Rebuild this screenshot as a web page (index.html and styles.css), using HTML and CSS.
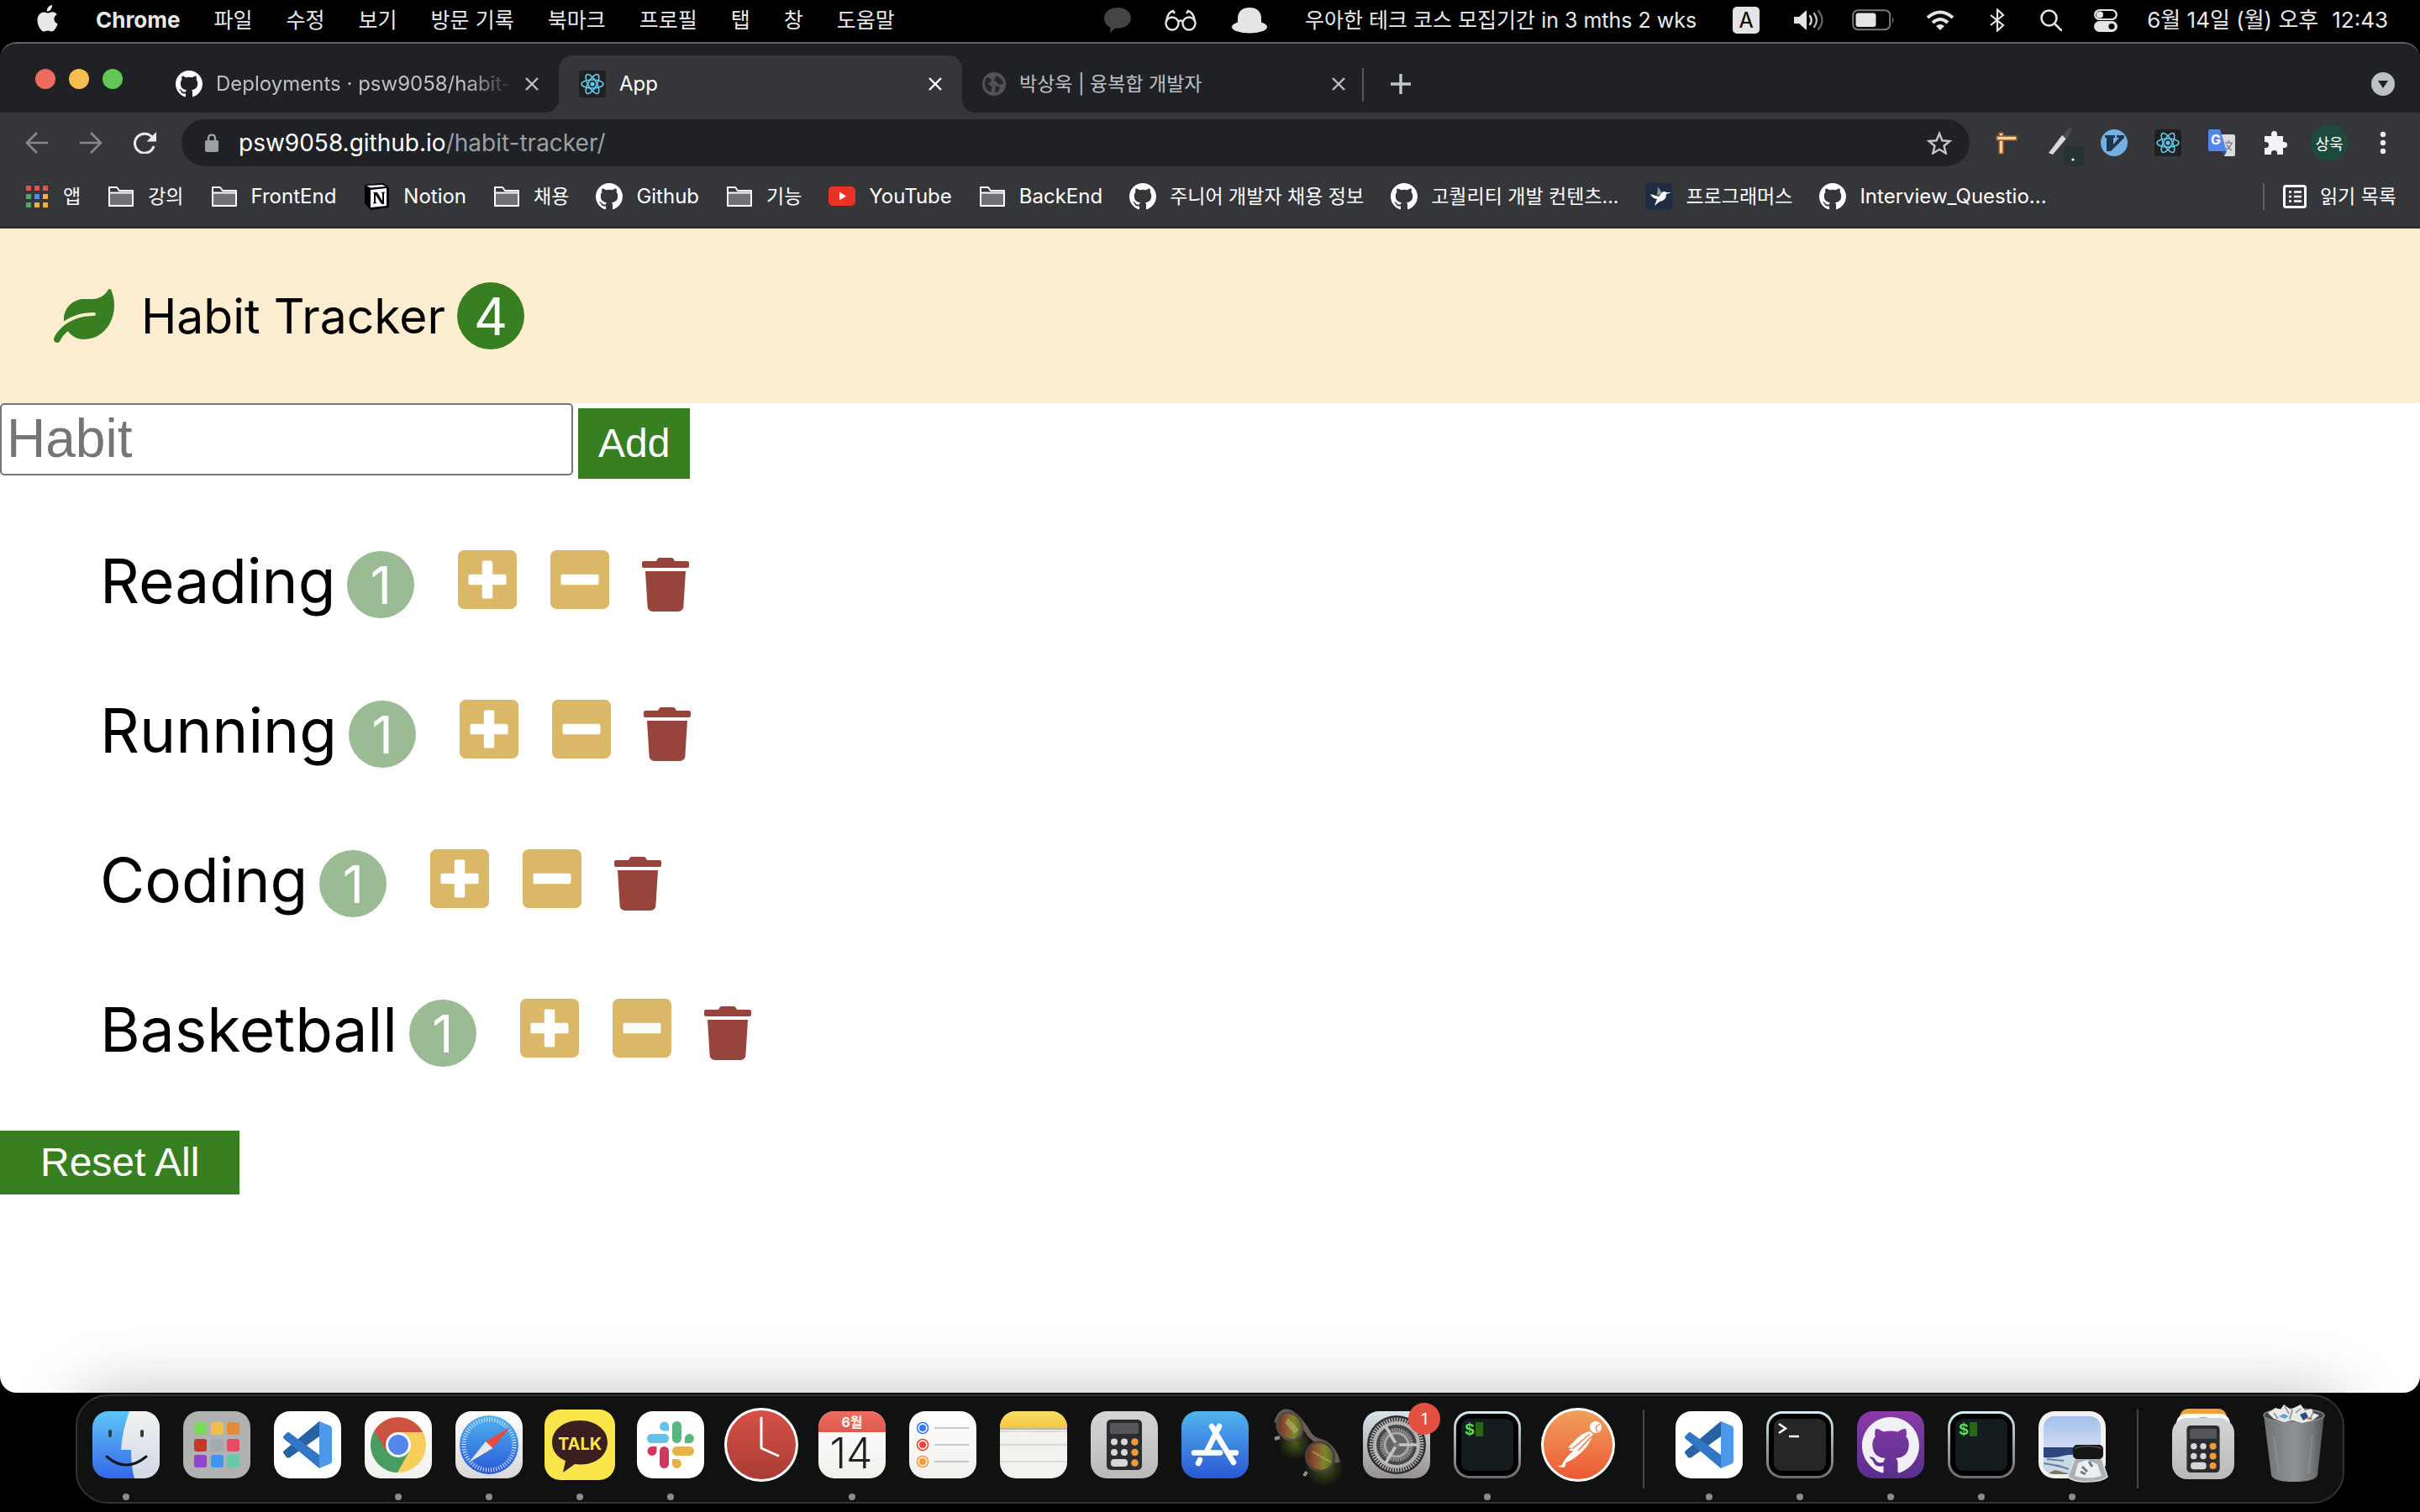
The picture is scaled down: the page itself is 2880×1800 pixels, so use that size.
FILE: index.html
```html
<!DOCTYPE html>
<html lang="ko">
<head>
<meta charset="utf-8">
<title>App</title>
<link rel="stylesheet" href="styles.css">
</head>
<body>
<svg class="defs" aria-hidden="true">
  <defs>
    <symbol id="github" viewBox="0 0 16 16"><path d="M8 0C3.58 0 0 3.58 0 8c0 3.54 2.29 6.53 5.47 7.59.4.07.55-.17.55-.38 0-.19-.01-.82-.01-1.49-2.01.37-2.53-.49-2.69-.94-.09-.23-.48-.94-.82-1.13-.28-.15-.68-.52-.01-.53.63-.01 1.08.58 1.23.82.72 1.21 1.87.87 2.33.66.07-.52.28-.87.51-1.07-1.78-.2-3.64-.89-3.64-3.95 0-.87.31-1.59.82-2.15-.08-.2-.36-1.02.08-2.12 0 0 .67-.21 2.2.82.64-.18 1.32-.27 2-.27.68 0 1.36.09 2 .27 1.53-1.04 2.2-.82 2.2-.82.44 1.1.16 1.92.08 2.12.51.56.82 1.27.82 2.15 0 3.07-1.87 3.75-3.65 3.95.29.25.54.73.54 1.48 0 1.07-.01 1.93-.01 2.2 0 .21.15.46.55.38A8.013 8.013 0 0016 8c0-4.42-3.58-8-8-8z" fill="currentColor"/></symbol>
    <symbol id="react" viewBox="0 0 32 32"><rect width="32" height="32" rx="3" fill="#20201f"/><g fill="none" stroke="#61c8ee" stroke-width="1.6"><ellipse cx="16" cy="16" rx="13" ry="5"/><ellipse cx="16" cy="16" rx="13" ry="5" transform="rotate(60 16 16)"/><ellipse cx="16" cy="16" rx="13" ry="5" transform="rotate(120 16 16)"/></g><circle cx="16" cy="16" r="2.6" fill="#61c8ee"/></symbol>
    <symbol id="folder" viewBox="0 0 32 26"><path d="M2 8V2h9l3 4h16v18H2z" fill="none" stroke="#fff" stroke-width="2" stroke-linejoin="round"/><path d="M3 9h26v14H3z" fill="#707174"/><path d="M2 8.500h28" stroke="#fff" stroke-width="2"/></symbol>
    <symbol id="close" viewBox="0 0 16 16"><path d="M1 1l14 14M15 1L1 15" stroke="currentColor" stroke-width="2.400" fill="none"/></symbol>
    <symbol id="plus-square" viewBox="0 32 448 448"><path fill="currentColor" d="M400 32H48C21.500 32 0 53.500 0 80v352c0 26.500 21.500 48 48 48h352c26.500 0 48-21.500 48-48V80c0-26.500-21.500-48-48-48zm-32 252c0 6.600-5.400 12-12 12h-92v92c0 6.600-5.400 12-12 12h-56c-6.600 0-12-5.400-12-12v-92H92c-6.600 0-12-5.400-12-12v-56c0-6.600 5.400-12 12-12h92v-92c0-6.600 5.400-12 12-12h56c6.600 0 12 5.400 12 12v92h92c6.600 0 12 5.400 12 12v56z"/></symbol>
    <symbol id="minus-square" viewBox="0 32 448 448"><path fill="currentColor" d="M400 32H48C21.500 32 0 53.500 0 80v352c0 26.500 21.500 48 48 48h352c26.500 0 48-21.500 48-48V80c0-26.500-21.500-48-48-48zM92 296c-6.600 0-12-5.400-12-12v-56c0-6.600 5.400-12 12-12h264c6.600 0 12 5.400 12 12v56c0 6.600-5.400 12-12 12H92z"/></symbol>
    <symbol id="trash" viewBox="0 0 448 512"><path fill="currentColor" d="M432 32H312l-9.400-18.700A24 24 0 0 0 281.100 0H166.800a23.720 23.720 0 0 0-21.400 13.300L136 32H16A16 16 0 0 0 0 48v32a16 16 0 0 0 16 16h416a16 16 0 0 0 16-16V48a16 16 0 0 0-16-16zM53.200 467a48 48 0 0 0 47.900 45h245.800a48 48 0 0 0 47.900-45L416 128H32z"/></symbol>
    <symbol id="vscode" viewBox="-8 -8 96 96"><rect width="80" height="80" rx="19" fill="#fff"/><path d="M12 47L54 12v18L19 55q-2 1-4 0l-3-4q-2-2 0-4z" fill="#2861a4"/><path d="M12 33q-2-2 0-4l3-3q2-2 4 0l35 26v16z" fill="#3277c6"/><path d="M54 12l12 5q3 1 3 4v38q0 3-3 4l-12 5z" fill="#4b99e8"/></symbol>
    <linearGradient id="g-rim" x2="0" y2="1"><stop offset="0" stop-color="#d8eef4"/><stop offset=".5" stop-color="#9aa4a8"/><stop offset="1" stop-color="#6c6c6c"/></linearGradient>
    <symbol id="iterm" viewBox="-8 -8 96 96"><rect width="80" height="80" rx="19" fill="url(#g-rim)"/><rect x="3" y="3" width="74" height="74" rx="16" fill="#000"/><rect x="9" y="9" width="62" height="62" rx="9" fill="#151c1f"/><text x="13" y="28" class="mono prompt">$</text><path d="M26 13h9v17h-9z" fill="#2a651c"/></symbol>
    <symbol id="calc" viewBox="0 0 42 60"><rect width="42" height="60" rx="5" fill="#2b2c30"/><rect x="4" y="4" width="34" height="13" rx="2" fill="#54565a"/><g fill="#d6d6d6"><circle cx="9" cy="26.500" r="4"/><circle cx="21" cy="26.500" r="4"/><circle cx="9" cy="39" r="4"/><circle cx="21" cy="39" r="4"/><rect x="5" y="47" width="20" height="9" rx="4"/></g><g fill="#f29a37"><circle cx="33.500" cy="26.500" r="4.300"/><circle cx="33.500" cy="39" r="4.300"/><circle cx="33.500" cy="51.500" r="4.300"/></g></symbol>
    <linearGradient id="g-blue" x2="0" y2="1"><stop offset="0" stop-color="#5cc6f8"/><stop offset="1" stop-color="#3567ea"/></linearGradient>
    <linearGradient id="g-store" x2="0" y2="1"><stop offset="0" stop-color="#50b4ee"/><stop offset="1" stop-color="#2a58d6"/></linearGradient>
    <linearGradient id="g-face" x2="0" y2="1"><stop offset="0" stop-color="#f2f2f2"/><stop offset="1" stop-color="#cfd8e4"/></linearGradient>
    <linearGradient id="g-white" x2="0" y2="1"><stop offset="0" stop-color="#fff"/><stop offset="1" stop-color="#d8d8d8"/></linearGradient>
    <linearGradient id="g-paper" x2="0" y2="1"><stop offset="0" stop-color="#fff"/><stop offset="1" stop-color="#f2f0ec"/></linearGradient>
    <linearGradient id="g-red" x2="0" y2="1"><stop offset="0" stop-color="#d65047"/><stop offset="1" stop-color="#a93d34"/></linearGradient>
    <linearGradient id="g-cal" x2="0" y2="1"><stop offset="0" stop-color="#ee6b5f"/><stop offset="1" stop-color="#dd5a4e"/></linearGradient>
    <linearGradient id="g-yellow" x2="0" y2="1"><stop offset="0" stop-color="#f9dc67"/><stop offset="1" stop-color="#f6c73f"/></linearGradient>
    <linearGradient id="g-gray" x2="0" y2="1"><stop offset="0" stop-color="#d4d6d6"/><stop offset="1" stop-color="#b9b9b7"/></linearGradient>
    <linearGradient id="g-pref" x2="0" y2="1"><stop offset="0" stop-color="#d9e3e9"/><stop offset="1" stop-color="#95928f"/></linearGradient>
    <linearGradient id="g-orange" x2="0" y2="1"><stop offset="0" stop-color="#f0a05c"/><stop offset="1" stop-color="#ec5935"/></linearGradient>
    <linearGradient id="g-purple" x2="0" y2="1"><stop offset="0" stop-color="#8a3ba8"/><stop offset="1" stop-color="#582f8c"/></linearGradient>
    <linearGradient id="g-lens" x1="0" y1=".1" x2="1" y2=".8"><stop offset="0" stop-color="#5c2019"/><stop offset=".4" stop-color="#8a5530"/><stop offset=".65" stop-color="#80862c"/><stop offset="1" stop-color="#4a5a1c"/></linearGradient>
    <linearGradient id="g-bin"><stop offset="0" stop-color="#6f7376"/><stop offset=".5" stop-color="#8f9396"/><stop offset=".8" stop-color="#74787b"/><stop offset="1" stop-color="#515558"/></linearGradient>
    <linearGradient id="g-sky" x2="0" y2="1"><stop offset="0" stop-color="#9dbbe9"/><stop offset="1" stop-color="#cfdcf2"/></linearGradient>
    <radialGradient id="g-glow"><stop offset="0" stop-color="#5f7a1c" stop-opacity=".7"/><stop offset="1" stop-color="#5f7a1c" stop-opacity="0"/></radialGradient>
    <clipPath id="squircle"><rect width="80" height="80" rx="19"/></clipPath>
    <clipPath id="photo"><rect x="6" y="6" width="68" height="69" rx="13"/></clipPath>
  </defs>
</svg>

<header class="menubar">
  <nav class="menus" aria-label="메뉴 막대">
    <button class="apple" aria-label="Apple"><svg width="28" height="34" viewBox="0 0 28 34"><path d="M19 1c.3 2.200-.6 4-1.700 5.400-1.200 1.400-2.800 2.300-4.500 2.200-.3-2 .6-4 1.700-5.200C15.700 2 17.600 1.200 19 1zM24.800 12.200c-2.200 1.300-3.400 3-3.400 5.400 0 2.800 1.600 4.800 4.200 5.800-.9 2.700-2 4.900-3.600 6.900-1 1.300-2.200 2.300-3.800 2.300s-2.300-1-4.300-1-2.900 1-4.400 1c-1.700 0-3-1.200-4.100-2.700C2.900 26.800 1.500 23 1.500 19c0-6 3.800-9.600 7.800-9.600 2 0 3.600 1.200 4.800 1.200 1.200 0 3.100-1.400 5.500-1.400 2 0 3.900 1 5.200 3z" fill="#e8e8e8"/></svg></button>
    <button class="bold">Chrome</button>
    <button>파일</button><button>수정</button><button>보기</button><button>방문 기록</button><button>북마크</button><button>프로필</button><button>탭</button><button>창</button><button>도움말</button>
  </nav>
  <div class="status">
    <svg class="i-talk" width="32" height="32" viewBox="0 0 32 32"><path d="M16 1C7 1 0 6.500 0 13.500c0 5 3 9 7.500 11L7 31l6-5.400C23.500 27 32 21 32 13.500 32 6.500 25 1 16 1z" fill="#444"/></svg>
    <svg class="i-glasses" width="38" height="26" viewBox="0 0 38 26" fill="none" stroke="#e4e4e4" stroke-width="2.400"><circle cx="9" cy="17" r="7.500"/><circle cx="29" cy="17" r="7.500"/><path d="M16 15q3-3 6 0M2 15Q3 4 10 2l2 3M36 15Q35 4 28 2l-2 3"/></svg>
    <svg class="i-hat" width="42" height="32" viewBox="0 0 42 32" fill="#e4e4e4"><path d="M7 24V14C7 5 13 1 21 1s14 4 14 13v10z"/><ellipse cx="21" cy="24" rx="21" ry="7.500"/></svg>
    <span class="countdown">우아한 테크 코스 모집기간 in 3 mths 2 wks</span>
    <span class="input-source">A</span>
    <svg class="i-sound" width="38" height="26" viewBox="0 0 38 26"><path d="M1 9h6l9-8v24l-9-8H1z" fill="#e4e4e4"/><g fill="none" stroke-width="2.200" stroke-linecap="round"><path d="M20 8q3.500 5 0 10" stroke="#e4e4e4"/><path d="M25 5q6 8 0 16" stroke="#bbb"/><path d="M30 2q9 11 0 22" stroke="#666"/></g></svg>
    <svg class="i-battery" width="52" height="26" viewBox="0 0 52 26"><rect x="1.200" y="1.200" width="44" height="23" rx="6" fill="none" stroke="#7a7a7a" stroke-width="2"/><rect x="4.500" y="4.500" width="24" height="16.500" rx="3" fill="#e4e4e4"/><path d="M48 9q3 4 0 8z" fill="#7a7a7a"/></svg>
    <svg class="i-wifi" width="34" height="26" viewBox="0 0 34 26"><g fill="none" stroke="#e4e4e4" stroke-width="4"><path d="M2 10Q17-3 32 10"/><path d="M8 16q9-8 18 0"/></g><path d="M17 25l-5-5q5-4 10 0z" fill="#e4e4e4"/></svg>
    <svg class="i-bt" width="18" height="28" viewBox="0 0 18 28" fill="none" stroke="#e4e4e4" stroke-width="2.200"><path d="M1 8l15 12-7 6.500v-25L16 8 1 20"/></svg>
    <svg class="i-search" width="26" height="26" viewBox="0 0 26 26" fill="none" stroke="#e4e4e4" stroke-width="2.600"><circle cx="10.500" cy="10.500" r="9"/><path d="M17 17l8 8" stroke-linecap="round"/></svg>
    <svg class="i-cc" width="28" height="28" viewBox="0 0 28 28"><rect x="1.200" y="2" width="25.600" height="11" rx="5.500" fill="none" stroke="#e4e4e4" stroke-width="2.200"/><circle cx="7" cy="7.500" r="4" fill="#e4e4e4"/><rect y="15" width="28" height="13" rx="6.500" fill="#e4e4e4"/><circle cx="21" cy="21.500" r="3.600" fill="#000"/></svg>
    <time class="clock"><span>6월 14일 (월) 오후</span><span>12:43</span></time>
  </div>
</header>

<section class="window">
  <div class="tabstrip">
    <div class="lights"><button class="red" aria-label="닫기"></button><button class="yellow" aria-label="최소화"></button><button class="green" aria-label="확대"></button></div>
    <div class="tab">
      <svg class="white" width="32" height="32"><use href="#github"/></svg>
      <span class="tab-title latin fade">Deployments · psw9058/habit-</span>
      <button aria-label="탭 닫기"><svg width="16" height="16"><use href="#close"/></svg></button>
    </div>
    <div class="tab active">
      <svg width="32" height="32"><use href="#react"/></svg>
      <span class="tab-title latin">App</span>
      <button aria-label="탭 닫기"><svg width="16" height="16"><use href="#close"/></svg></button>
    </div>
    <div class="tab last">
      <svg width="28" height="28" viewBox="0 0 28 28"><circle cx="14" cy="14" r="14" fill="#505256"/><path d="M5 6q5 0 6 4l-4 4 5 4-2 6Q3 21 3 13q0-4 2-7zM17 4q7 3 8 10l-5 1-3-4-3-1 1-3zM16 16l5 2-2 5-4 1z" fill="#25272a"/></svg>
      <span class="tab-title">박상욱 | 융복합 개발자</span>
      <button aria-label="탭 닫기"><svg width="16" height="16"><use href="#close"/></svg></button>
    </div>
    <button class="new-tab" aria-label="새 탭"><svg width="24" height="24" viewBox="0 0 24 24"><path d="M12 0v24M0 12h24" stroke="#c3c6ca" stroke-width="3.400"/></svg></button>
    <button class="tab-search" aria-label="탭 검색"><svg width="28" height="28" viewBox="0 0 28 28"><circle cx="14" cy="14" r="14" fill="#bdc1c6"/><path d="M8 10h12l-6 9z" fill="#202124"/></svg></button>
  </div>

  <div class="toolbar">
    <div class="nav-buttons">
      <button aria-label="뒤로"><svg width="28" height="26" viewBox="0 0 28 26" fill="none" stroke="#86888b" stroke-width="2.600"><path d="M27 13H2M14 1L2 13l12 12"/></svg></button>
      <button aria-label="앞으로"><svg width="28" height="26" viewBox="0 0 28 26" fill="none" stroke="#86888b" stroke-width="2.600"><path d="M1 13h25M14 1l12 12-12 12"/></svg></button>
      <button aria-label="새로고침"><svg width="28" height="26" viewBox="0 0 28 26"><path d="M24 8A11.500 11.500 0 1 0 25 17" fill="none" stroke="#e8eaed" stroke-width="3"/><path d="M28 0v11.500H16.500z" fill="#e8eaed"/></svg></button>
    </div>
    <div class="omnibox" role="textbox" aria-label="주소창">
      <svg width="16" height="22" viewBox="0 0 16 22"><rect y="8" width="16" height="14" rx="2" fill="#9aa0a6"/><path d="M4 9V6q0-4.500 4-4.500T12 6v3" fill="none" stroke="#9aa0a6" stroke-width="2.400"/></svg>
      <span class="url">psw9058.github.io<span class="path">/habit-tracker/</span></span>
      <button aria-label="북마크 추가"><svg width="30" height="28" viewBox="0 0 30 28"><path d="M15 3l3.400 8.300 9 .7-6.900 5.800 2.200 8.700L15 21.800l-7.700 4.700 2.200-8.700L2.600 12l9-.7z" fill="none" stroke="#c3c6ca" stroke-width="2.400"/></svg></button>
    </div>
    <div class="extensions">
      <button aria-label="Page Ruler"><svg width="32" height="32" viewBox="0 0 32 32"><path d="M7 4h5v25H7z" fill="#f6cf9d" stroke="#8f5423" stroke-width="1.500"/><path d="M4 8h24v5H4z" fill="#f6cf9d" stroke="#8f5423" stroke-width="1.500"/></svg></button>
      <button aria-label="Dropper"><svg width="44" height="48" viewBox="0 0 44 48"><path d="M2 36L18 15l5 4L7 38z" fill="#d9d9d7"/><path d="M19 15l7-9q4-2 4 3l-7 11z" fill="#4b4b49"/><rect x="20" y="28" width="24" height="24" rx="4" fill="#273235"/><circle cx="31" cy="44" r="1.600" fill="#fff"/></svg></button>
      <button aria-label="Vimium"><svg width="32" height="32" viewBox="0 0 32 32"><circle cx="16" cy="16" r="16" fill="#74b0e2"/><path d="M5 7h12v3h-2v8l7-8h-3V7h9v3L12 26H7V10H5z" fill="#22364a"/></svg></button>
      <button aria-label="React"><svg width="32" height="32"><use href="#react"/></svg></button>
      <button aria-label="Google 번역"><svg width="32" height="32" viewBox="0 0 32 32"><path d="M12 6h18q2 0 2 2v22q0 2-2 2H19z" fill="#dcdcdc"/><path d="M2 0h12l8 26H2q-2 0-2-2V2q0-2 2-2z" fill="#5487ec"/><path d="M16 26h6l-3 6z" fill="#3949ab"/><path d="M20 16h9M24.500 13v3M28 16q-2 6-7 8M22 18q2 5 6 7" fill="none" stroke="#7a868c" stroke-width="1.500"/><text x="3" y="18" class="g-letter">G</text></svg></button>
      <button aria-label="확장 프로그램"><svg width="32" height="32" viewBox="0 0 32 32"><path d="M3 8h8V6q0-4 3.500-4T18 6v2h7v7h1.500q3.500 0 3.500 3.500T26.500 22H25v8h-7v-2q0-3-3.500-3T11 28v2H3v-8h1.500Q8 22 8 18.500T4.500 15H3z" fill="#f1f3f4"/></svg></button>
    </div>
    <button class="avatar">상욱</button>
    <button class="kebab" aria-label="메뉴"><svg width="8" height="28" viewBox="0 0 8 28" fill="#e8eaed"><circle cx="4" cy="4" r="3.200"/><circle cx="4" cy="14" r="3.200"/><circle cx="4" cy="24" r="3.200"/></svg></button>
  </div>

  <nav class="bookmarks" aria-label="북마크">
    <a href="#"><svg width="28" height="26" viewBox="0 0 28 26"><g fill="#df5447"><path d="M0 0h6v6H0zM10 0h6v6h-6zM20 0h6v6h-6z"/></g><path d="M0 10h6v6H0zM0 20h6v6H0z" fill="#57a55d"/><path d="M10 10h6v6h-6z" fill="#4d8bf5"/><path d="M20 10h6v6h-6zM10 20h6v6h-6zM20 20h6v6h-6z" fill="#eeb03e"/></svg>앱</a>
    <a href="#"><svg width="32" height="26"><use href="#folder"/></svg>강의</a>
    <a href="#" class="latin"><svg width="32" height="26"><use href="#folder"/></svg>FrontEnd</a>
    <a href="#" class="latin"><svg width="32" height="32" viewBox="0 0 32 32"><path d="M2 2l22-2 7 5v24l-22 3-7-8z" fill="#000"/><path d="M9 8l19-2v21l-19 2z" fill="#fff"/><path d="M4 3l19-1 4 2-18 1.500z" fill="#fff"/><path d="M12 11h5l6 10V12l-2-1 5-.500v1l-1 .500v13h-3L15 14v9l2 1-5 .500v-1l1-.500V12z" fill="#000"/></svg>Notion</a>
    <a href="#"><svg width="32" height="26"><use href="#folder"/></svg>채용</a>
    <a href="#" class="latin"><svg class="white" width="32" height="32"><use href="#github"/></svg>Github</a>
    <a href="#"><svg width="32" height="26"><use href="#folder"/></svg>기능</a>
    <a href="#" class="latin"><svg width="32" height="24" viewBox="0 0 32 24"><rect width="32" height="23" rx="5" fill="#e93223"/><path d="M13 6.500l8 5-8 5z" fill="#fff"/></svg>YouTube</a>
    <a href="#" class="latin"><svg width="32" height="26"><use href="#folder"/></svg>BackEnd</a>
    <a href="#"><svg class="white" width="32" height="32"><use href="#github"/></svg>주니어 개발자 채용 정보</a>
    <a href="#"><svg class="white" width="32" height="32"><use href="#github"/></svg>고퀄리티 개발 컨텐츠...</a>
    <a href="#"><svg width="32" height="32" viewBox="0 0 32 32"><rect width="32" height="32" rx="4" fill="#202c40"/><path d="M15 4l5 8-6 3z" fill="#8b95a5"/><path d="M6 13l10 3 4-5q3-2 5 0l6 0-6 2q0 8-8 9l-6 5 3-8q-6-1-8-6z" fill="#fff"/></svg>프로그래머스</a>
    <a href="#" class="latin"><svg class="white" width="32" height="32"><use href="#github"/></svg>Interview_Questio...</a>
    <button class="reading-list"><svg width="28" height="28" viewBox="0 0 28 28" fill="none" stroke="#fff"><rect x="1.500" y="1.500" width="25" height="25" rx="2" stroke-width="3"/><path d="M7 8.500h3M13 8.500h9M7 14h3M13 14h9M7 19.500h3M13 19.500h9" stroke-width="2.600"/></svg>읽기 목록</button>
  </nav>

  <main class="page">
    <header class="navbar">
      <svg class="leaf" width="72" height="64" viewBox="0 0 576 512"><path fill="currentColor" d="M546.200 9.700c-5.600-12.500-21.600-13-28.300-1.200C486.900 62.400 431.400 96 368 96h-80C182 96 96 182 96 288c0 7 .8 13.700 1.500 20.500C161.300 262.800 253.400 224 384 224c8.800 0 16 7.200 16 16s-7.200 16-16 16C132.600 256 26 410.100 2.400 468c-6.600 16.300 1.200 34.900 17.500 41.600 16.400 6.800 35-1.100 41.800-17.300 1.500-3.600 20.900-47.900 71.900-90.600 32.400 43.900 94 85.800 174.900 77.200C465.500 467.500 576 326.700 576 154.300c0-50.200-10.800-102.200-29.800-144.600z"/></svg>
      <h1 class="title">Habit Tracker</h1>
      <span class="badge total">4</span>
    </header>
    <form class="add-form">
      <input class="habit-input" type="text" placeholder="Habit" aria-label="Habit">
      <button class="add" type="button">Add</button>
    </form>
    <ul class="habits">
      <li class="habit"><span class="name">Reading</span><span class="badge">1</span><button class="step" aria-label="increase"><svg width="70" height="70"><use href="#plus-square"/></svg></button><button class="step" aria-label="decrease"><svg width="70" height="70"><use href="#minus-square"/></svg></button><button class="delete" aria-label="delete"><svg width="56" height="64"><use href="#trash"/></svg></button></li>
      <li class="habit"><span class="name">Running</span><span class="badge">1</span><button class="step" aria-label="increase"><svg width="70" height="70"><use href="#plus-square"/></svg></button><button class="step" aria-label="decrease"><svg width="70" height="70"><use href="#minus-square"/></svg></button><button class="delete" aria-label="delete"><svg width="56" height="64"><use href="#trash"/></svg></button></li>
      <li class="habit"><span class="name">Coding</span><span class="badge">1</span><button class="step" aria-label="increase"><svg width="70" height="70"><use href="#plus-square"/></svg></button><button class="step" aria-label="decrease"><svg width="70" height="70"><use href="#minus-square"/></svg></button><button class="delete" aria-label="delete"><svg width="56" height="64"><use href="#trash"/></svg></button></li>
      <li class="habit"><span class="name">Basketball</span><span class="badge">1</span><button class="step" aria-label="increase"><svg width="70" height="70"><use href="#plus-square"/></svg></button><button class="step" aria-label="decrease"><svg width="70" height="70"><use href="#minus-square"/></svg></button><button class="delete" aria-label="delete"><svg width="56" height="64"><use href="#trash"/></svg></button></li>
    </ul>
    <button class="reset">Reset All</button>
  </main>
</section>

<footer class="dock">
  <button class="app running" aria-label="Finder"><svg viewBox="-8 -8 96 96"><g clip-path="url(#squircle)"><path d="M0 0h80v80H0z" fill="url(#g-blue)"/><path d="M44 0Q35 25 34 46h12q0 20 4 34h30V0z" fill="url(#g-face)"/></g><path d="M21 24v5M59 24v5" stroke="#333a44" stroke-width="4" stroke-linecap="round"/><path d="M17 54q23 20 47 0" fill="none" stroke="#12161e" stroke-width="3" stroke-linecap="round"/></svg></button>
  <button class="app" aria-label="Launchpad"><svg viewBox="-8 -8 96 96"><rect width="80" height="80" rx="19" fill="#b0b1b1"/><rect x="13" y="13" width="15" height="15" rx="3" fill="#77dc55"/><rect x="33" y="13" width="15" height="15" rx="3" fill="#f3bf43"/><rect x="52" y="13" width="15" height="15" rx="3" fill="#e78a36"/><rect x="13" y="33" width="15" height="15" rx="3" fill="#ca3529"/><rect x="33" y="33" width="15" height="15" rx="3" fill="#a3abaf"/><rect x="52" y="33" width="15" height="15" rx="3" fill="#e94b60"/><rect x="13" y="52" width="15" height="15" rx="3" fill="#8c46c8"/><rect x="33" y="52" width="15" height="15" rx="3" fill="#3f96f0"/><rect x="52" y="52" width="15" height="15" rx="3" fill="#67c9a8"/></svg></button>
  <button class="app" aria-label="Visual Studio Code"><svg><use href="#vscode"/></svg></button>
  <button class="app running" aria-label="Chrome"><svg viewBox="-8 -8 96 96"><rect width="80" height="80" rx="19" fill="url(#g-paper)"/><circle cx="40" cy="40" r="33" fill="#f7cd5c"/><path d="M11.400 23.500A33 33 0 0 0 39 73l14-25-13-8z" fill="#479d62"/><path d="M11.400 23.500L26 48l14-23h29A33 33 0 0 0 11.400 23.500z" fill="#cc5242"/><circle cx="40" cy="40" r="15" fill="#fff"/><circle cx="40" cy="40" r="12" fill="#5586ec"/></svg></button>
  <button class="app running" aria-label="Safari"><svg viewBox="-8 -8 96 96"><rect width="80" height="80" rx="19" fill="url(#g-white)"/><circle cx="40" cy="40" r="35" fill="url(#g-store)"/><circle cx="40" cy="40" r="30" fill="none" stroke="#dbeafb" stroke-width="5" stroke-dasharray="1 2.140"/><path d="M65 19L44.500 44 36 36z" fill="#e8493c"/><path d="M16 61l20-25 8.500 8z" fill="#e8e8e8"/></svg></button>
  <button class="app running" aria-label="KakaoTalk"><svg viewBox="-8 -8 96 96"><rect x="-2" y="-2" width="84" height="84" rx="19" fill="#fae54b"/><path d="M40 11C21 11 7 22 7 37c0 10 6 18 16 22l-3 14 14-10c24 3 39-10 39-26 0-15-14-26-33-26z" fill="#3a1f20"/><text x="40" y="46" class="talk">TALK</text></svg></button>
  <button class="app running" aria-label="Slack"><svg viewBox="-8 -8 96 96"><rect width="80" height="80" rx="19" fill="#fff"/><g stroke-width="11" stroke-linecap="round"><path d="M17.500 32.500h15" stroke="#63c1ec"/><path d="M47.500 17.500v15" stroke="#5bb582"/><path d="M32.500 47.500v15" stroke="#cf375e"/><path d="M47.500 47.500h15" stroke="#e4b44b"/></g><path d="M38 23.500h-6a5.500 5.500 0 1 1 6-6z" fill="#63c1ec"/><path d="M57 38v-6a5.500 5.500 0 1 1 6 6z" fill="#5bb582"/><path d="M42 57h6a5.500 5.500 0 1 1-6 6z" fill="#e4b44b"/><path d="M23.500 42v6a5.500 5.500 0 1 1-6-6z" fill="#cf375e"/></svg></button>
  <button class="app" aria-label="Clock"><svg viewBox="-8 -8 96 96"><circle cx="40" cy="40" r="44" fill="#fff"/><circle cx="40" cy="40" r="41" fill="url(#g-red)"/><path d="M40 8v36l20 9" fill="none" stroke="#fff" stroke-width="3" stroke-linecap="round" stroke-linejoin="round"/></svg></button>
  <button class="app running" aria-label="Calendar"><svg viewBox="-8 -8 96 96"><g clip-path="url(#squircle)"><path d="M0 0h80v80H0z" fill="url(#g-paper)"/><path d="M0 0h80v25H0z" fill="url(#g-cal)"/></g><text x="40" y="19" class="month">6월</text><text x="39" y="68" class="day">14</text></svg></button>
  <button class="app" aria-label="Reminders"><svg viewBox="-8 -8 96 96"><rect width="80" height="80" rx="19" fill="url(#g-paper)"/><path d="M30 20h41M30 40h41M30 60h41" stroke="#b9b9be" stroke-width="1.600"/><g stroke-width="1.600" fill="none"><circle cx="16" cy="20" r="6.500" stroke="#3478f6"/><circle cx="16" cy="40" r="6.500" stroke="#e8463a"/><circle cx="16" cy="60" r="6.500" stroke="#f09a37"/></g><circle cx="16" cy="20" r="4" fill="#3478f6"/><circle cx="16" cy="40" r="4" fill="#e8463a"/><circle cx="16" cy="60" r="4" fill="#f09a37"/></svg></button>
  <button class="app" aria-label="Notes"><svg viewBox="-8 -8 96 96"><g clip-path="url(#squircle)"><path d="M0 0h80v80H0z" fill="#f3f2ee"/><path d="M0 0h80v20H0z" fill="url(#g-yellow)"/><path d="M0 21h80" stroke="#a4a095" stroke-width="1.600"/><path d="M0 24h80" stroke="#bab8b2" stroke-width="1.400" stroke-dasharray="1.400 1.400"/><path d="M0 40h80M0 60h80" stroke="#d3d2d3" stroke-width="1.600"/></g></svg></button>
  <button class="app" aria-label="Calculator"><svg viewBox="-8 -8 96 96"><rect width="80" height="80" rx="19" fill="url(#g-gray)"/><use href="#calc" x="19" y="10" width="42" height="60"/></svg></button>
  <button class="app" aria-label="App Store"><svg viewBox="-8 -8 96 96"><rect width="80" height="80" rx="19" fill="url(#g-store)"/><g stroke="#fff" stroke-width="6.500" stroke-linecap="round"><path d="M45 18L31 46M36 18l26 43M15 49.500h31M57 49.500h8M22 58l-2 4"/></g></svg></button>
  <button class="app" aria-label="Sunglasses"><svg viewBox="-8 -8 96 96"><circle cx="27" cy="38" r="20" fill="url(#g-glow)"/><circle cx="62" cy="66" r="24" fill="url(#g-glow)"/><path d="M5 14Q10-2 20 1q10 3 22 23 5 10 18 13 13 5 18 24" fill="none" stroke="#6a5d58" stroke-width="6"/><ellipse cx="21" cy="18" rx="14.500" ry="17" transform="rotate(-30 21 18)" fill="url(#g-lens)" stroke="#554a46" stroke-width="3"/><ellipse cx="57" cy="54" rx="16.500" ry="17.500" transform="rotate(-30 57 54)" fill="url(#g-lens)" stroke="#4a423f" stroke-width="3"/><path d="M19 8l13 14-5 5L15 14z" fill="#c0c27c" opacity=".5"/><path d="M48 48l22 13" stroke="#c4b25c" stroke-width="2" opacity=".6"/><path d="M34 40l8 4" stroke="#2a2726" stroke-width="4"/><path d="M3 33l6-2M38 77l3-5" stroke="#8d8d8d" stroke-width="4"/></svg></button>
  <button class="app" aria-label="System Preferences"><svg viewBox="-8 -8 96 96"><rect width="80" height="80" rx="19" fill="url(#g-pref)"/><circle cx="40" cy="40" r="35" fill="#2e2e2e"/><circle cx="40" cy="40" r="30" fill="none" stroke="#b3b3b1" stroke-width="5" stroke-dasharray="1.700 1.440"/><circle cx="40" cy="40" r="26" fill="#484848" stroke="#b5b5b3" stroke-width="4"/><circle cx="40" cy="40" r="18" fill="#5c5c5b" stroke="#9a9a98" stroke-width="4" stroke-dasharray="1.600 1.200"/><circle cx="40" cy="40" r="14" fill="#666" stroke="#a8a8a6" stroke-width="3"/><path d="M40 40h25M40 40L27 18M40 40L27 62" stroke="#c4c4c2" stroke-width="3.500"/><circle cx="40" cy="40" r="3" fill="#777"/><circle cx="73" cy="9" r="19" fill="#e2503f"/><text x="73" y="16" class="notice">1</text></svg></button>
  <button class="app running" aria-label="iTerm"><svg><use href="#iterm"/></svg></button>
  <button class="app" aria-label="Postman"><svg viewBox="-8 -8 96 96"><circle cx="40" cy="40" r="44" fill="#fff"/><circle cx="40" cy="40" r="41" fill="url(#g-orange)"/><circle cx="61" cy="19" r="7" fill="#fff"/><path d="M61 19l5-4M61 19l2 6" stroke="#ec8350" stroke-width="1.400"/><path d="M53 24q-9 3-15 9L28 43l5 1-4 2q3 2 6 1-11 8-14 17l-6 2 9 1 2-6q8-3 18-12 10-9 14-22z" fill="#fff"/><path d="M54 27L33 45M57 29L40 47" stroke="#ec7a4a" stroke-width="1.400"/></svg></button>
  <span class="divider"></span>
  <button class="app running" aria-label="Visual Studio Code"><svg><use href="#vscode"/></svg></button>
  <button class="app running" aria-label="Terminal"><svg viewBox="-8 -8 96 96"><rect width="80" height="80" rx="19" fill="url(#g-rim)"/><rect x="3" y="3" width="74" height="74" rx="16" fill="#000"/><rect x="9" y="9" width="62" height="62" rx="9" fill="#262626"/><path d="M15 15l8 5.500-8 5.500M27 30h12" fill="none" stroke="#fff" stroke-width="2.600"/></svg></button>
  <button class="app running" aria-label="GitHub Desktop"><svg viewBox="-8 -8 96 96"><rect width="80" height="80" rx="19" fill="url(#g-purple)"/><svg class="mark" x="6" y="7" width="68" height="68"><use href="#github"/></svg></svg></button>
  <button class="app running" aria-label="iTerm"><svg><use href="#iterm"/></svg></button>
  <button class="app running" aria-label="Preview"><svg viewBox="-8 -8 96 96"><rect width="80" height="80" rx="19" fill="#f2f1ef"/><g clip-path="url(#photo)"><path d="M0 0h80v44H0z" fill="url(#g-sky)"/><path d="M0 43h80v37H0z" fill="#2d4680"/><path d="M0 54q16 3 30-1t40 4v23H0z" fill="#c8d8e6"/><path d="M6 62l18 3 12 4M10 57l20 2" stroke="#6583a8" stroke-width="2"/><path d="M6 76l14-6 18 5v6H6z" fill="#7f7560"/></g><path d="M44 54h30l8 24q-6 6-24 6t-23-6z" fill="#aab0b4" stroke="#dde2e4" stroke-width="1.500"/><path d="M47 62l10-4 13 5 5 14q-16 5-32 0z" fill="#eceff1"/><path d="M52 66l6 6M60 60l4 6M50 72l6 3" stroke="#6d7b8a" stroke-width="3"/><rect x="41" y="40" width="36" height="17" rx="5" fill="#161616"/><path d="M43 44q16-5 32 0" stroke="#444" stroke-width="2" fill="none"/></svg></button>
  <span class="divider"></span>
  <button class="app" aria-label="Downloads"><svg viewBox="-8 -8 96 96"><rect x="12" y="-3" width="56" height="40" rx="10" fill="#f1a13b"/><rect x="8" y="3" width="64" height="40" rx="12" fill="#fff"/><path d="M31 9q9-4 18 0z" fill="#45c5a0"/><rect x="3" y="8" width="74" height="73" rx="18" fill="url(#g-gray)"/><use href="#calc" x="20" y="17" width="40" height="56"/></svg></button>
  <button class="app" aria-label="Trash"><svg viewBox="-8 -8 96 96"><path d="M4 4l9 72q2 8 27 8t28-8l8-72z" fill="url(#g-bin)"/><ellipse cx="40" cy="5" rx="36" ry="8" fill="#45484a" stroke="#85898c" stroke-width="1.500"/><path d="M9 2l9-6 6 2 4-6 8 6 6-3 6-3 5 7 8-2 2 5 7 3-8 6-12 3-12-3-10 2-12-4z" fill="#e9e9e7"/><path d="M22 6l6-3 6 3-5 3z" fill="#55a8d8"/><path d="M47 4l7-3 3 6-6 4z" fill="#2f4a7c"/><path d="M54 9l6-2 2 3z" fill="#c1502e"/><path d="M16 2l5 7M38-2l-3 12M42 2l6-5M63 1l-4 9M29-6l5 9" stroke="#8a8a88" stroke-width="1.500"/><path d="M16 30l6 44M62 28l-5 46" stroke="#a2a6a9" stroke-width="2" opacity=".35"/></svg></button>
</footer>
</body>
</html>
```
FILE: styles.css
```css
* { box-sizing: border-box; }

body {
  margin: 0;
  min-height: 100vh;
  display: flex;
  flex-direction: column;
  padding-bottom: 10px;
  background: #000;
  color: #e8e8e8;
  font-family: Inter, "Noto Sans CJK KR", sans-serif;
}

button {
  margin: 0;
  padding: 0;
  border: 0;
  background: none;
  color: inherit;
  font: inherit;
}

svg { display: block; flex: none; }
.defs { position: absolute; width: 0; height: 0; }
.white { color: #fff; }

/* System menu bar */
.menubar {
  display: flex;
  justify-content: space-between;
  align-items: center;
  height: 50px;
  padding: 0 38px 2px 43px;
  font-size: 25px;
  line-height: 36px;
  white-space: nowrap;
}
.menus { display: flex; align-items: center; gap: 40px; }
.apple { padding: 0 3px 4px 0; }
.bold { font-size: 26px; font-weight: 700; }
.status { display: flex; align-items: center; }
.i-talk { margin-right: 40px; }
.i-glasses { margin-right: 42px; }
.i-hat { margin-right: 45px; }
.countdown { margin-right: 43px; }
.input-source {
  width: 32px;
  height: 32px;
  margin-right: 40px;
  border-radius: 5px;
  background: #e4e4e4;
  color: #000;
  line-height: 32px;
  text-align: center;
}
.i-sound { margin-right: 32px; }
.i-battery { margin-right: 36px; }
.i-wifi { margin-right: 42px; }
.i-bt { margin-right: 42px; }
.i-search { margin-right: 38px; }
.i-cc { margin-right: 35px; }
.clock { display: flex; gap: 16px; font-size: 26px; }

/* Browser window */
.window {
  flex: 1;
  display: flex;
  flex-direction: column;
  overflow: hidden;
  border-top: 2px solid #626366;
  border-radius: 20px;
  background: #35363a;
  white-space: nowrap;
}

.tabstrip {
  display: flex;
  align-items: flex-end;
  height: 82px;
  padding: 0 30px 0 42px;
  background: #202124;
  font-size: 23px;
  color: #bdc1c6;
}
.latin { font-size: 24px; }
.lights { display: flex; gap: 16px; margin: 0 39px 28px 0; }
.lights button { width: 24px; height: 24px; border-radius: 50%; }
.red { background: #ed6a5f; }
.yellow { background: #f5be4f; }
.green { background: #62c655; }

.tab {
  position: relative;
  flex: 0 1 480px;
  min-width: 0;
  display: flex;
  align-items: center;
  gap: 16px;
  height: 68px;
  padding: 0 24px;
}
.tab-title { flex: 1; overflow: hidden; line-height: 34px; }
.fade {
  -webkit-mask-image: linear-gradient(90deg, #000 85%, transparent);
  mask-image: linear-gradient(90deg, #000 85%, transparent);
}
.tab.active {
  border-radius: 16px 16px 0 0;
  background: #35363a;
  color: #fff;
}
.tab.active::before,
.tab.active::after {
  content: "";
  position: absolute;
  bottom: 0;
  width: 16px;
  height: 16px;
}
.tab.active::before { right: 100%; background: radial-gradient(circle at 0 0, transparent 16px, #35363a 16px); }
.tab.active::after { left: 100%; background: radial-gradient(circle at 100% 0, transparent 16px, #35363a 16px); }
.tab.last::after {
  content: "";
  position: absolute;
  right: 2px;
  top: 15px;
  width: 2px;
  height: 40px;
  background: #55575b;
}
.new-tab { margin: 0 0 22px 30px; }
.tab-search { margin: 0 0 20px auto; }

.toolbar {
  display: flex;
  align-items: center;
  height: 72px;
  padding: 0 40px 0 30px;
}
.nav-buttons { display: flex; gap: 36px; margin-right: 30px; }
.omnibox {
  flex: 1;
  display: flex;
  align-items: center;
  gap: 24px;
  height: 56px;
  padding: 0 21px 0 28px;
  border-radius: 28px;
  background: #202124;
  font-size: 28px;
  line-height: 36px;
  color: #fff;
}
.url { flex: 1; }
.path { color: #9aa0a6; }
.extensions {
  display: grid;
  grid-template-columns: repeat(6, 64px);
  align-items: center;
  height: 56px;
  padding-left: 28px;
}
.extensions svg { overflow: visible; }
.g-letter { font: 700 16px Inter, sans-serif; fill: #fff; }
.avatar {
  width: 44px;
  height: 44px;
  margin: 0 38px 0 -6px;
  border-radius: 50%;
  background: #1e4a3e;
  color: #fff;
  font-size: 18px;
}

.bookmarks {
  display: flex;
  align-items: center;
  gap: 32px;
  height: 66px;
  padding: 0 28px 8px 31px;
  border-bottom: 2px solid #26272a;
  font-size: 23px;
  line-height: 34px;
  color: #fff;
}
.bookmarks .latin { font-size: 24px; }
.bookmarks a,
.reading-list {
  display: flex;
  align-items: center;
  gap: 16px;
  color: #fff;
  text-decoration: none;
}
.reading-list {
  height: 32px;
  margin-left: auto;
  padding-left: 22px;
  border-left: 2px solid #606266;
}

/* Habit tracker page */
.page { flex: 1; background: #fff; color: #000; }
.navbar {
  display: flex;
  align-items: center;
  padding: 64px;
  background: #fcecd0;
}
.leaf { color: #387f22; }
.title {
  margin: 0 14px 0 32px;
  padding-top: 2px;
  font-size: 57px;
  font-weight: 400;
  line-height: 78px;
}
.badge {
  width: 80px;
  height: 80px;
  border-radius: 50%;
  background: #9abb94;
  color: #fff;
  font-size: 62px;
  line-height: 82px;
  text-align: center;
}
.total { background: #387f22; }

.add-form { display: flex; align-items: baseline; gap: 6px; height: 90px; }
.habit-input {
  width: 682px;
  height: 86px;
  padding: 6px 6px 8px;
  border: 2px solid #767676;
  border-radius: 5px;
  font: 64px "Liberation Sans", Arial, sans-serif;
}
.habit-input::placeholder { color: #757575; }
.add,
.reset {
  background: #387f22;
  color: #fff;
  font: 48px/56px "Liberation Sans", Arial, sans-serif;
}
.add { padding: 14px 24px; }
.reset { display: block; padding: 10px 48px; }

.habits { margin: 0; padding: 37px 0 27px 119px; list-style: none; }
.habit { display: flex; align-items: center; height: 178px; }
.name { margin-right: 14px; padding-bottom: 8px; font-size: 73px; line-height: 96px; }
.step { margin-left: 40px; padding-bottom: 12px; color: #dbb867; }
.badge + .step { margin-left: 52px; }
.delete { margin-left: 39px; color: #97443c; }

/* Dock */
.dock {
  align-self: center;
  display: flex;
  margin-top: 2px;
  padding: 0 4px;
  border: 2px solid #333;
  border-radius: 38px;
  background: #111;
  box-shadow: 0 0 80px rgba(0, 0, 0, .26);
}
.app {
  display: flex;
  flex-direction: column;
  align-items: center;
  gap: 10px;
  width: 108px;
  height: 126px;
  padding-top: 10px;
}
.app > svg { width: 96px; height: 96px; overflow: visible; }
.running::after {
  content: "";
  width: 8px;
  height: 8px;
  border-radius: 50%;
  background: #8c8c8c;
}
.divider { width: 2px; height: 94px; margin: 16px 23px 0; background: #464646; }
.mark { color: #f1f0f5; }
.mono { font: 700 20px "Liberation Mono", monospace; }
.prompt { fill: #5fe04a; }
.talk { font: 700 20px Inter, sans-serif; fill: #fae54b; text-anchor: middle; }
.month { font: 700 16px Inter, "Noto Sans CJK KR", sans-serif; fill: #fff; text-anchor: middle; }
.day { font: 300 50px Inter, sans-serif; fill: #222; text-anchor: middle; }
.notice { font: 400 19px Inter, sans-serif; fill: #fff; text-anchor: middle; }
```
